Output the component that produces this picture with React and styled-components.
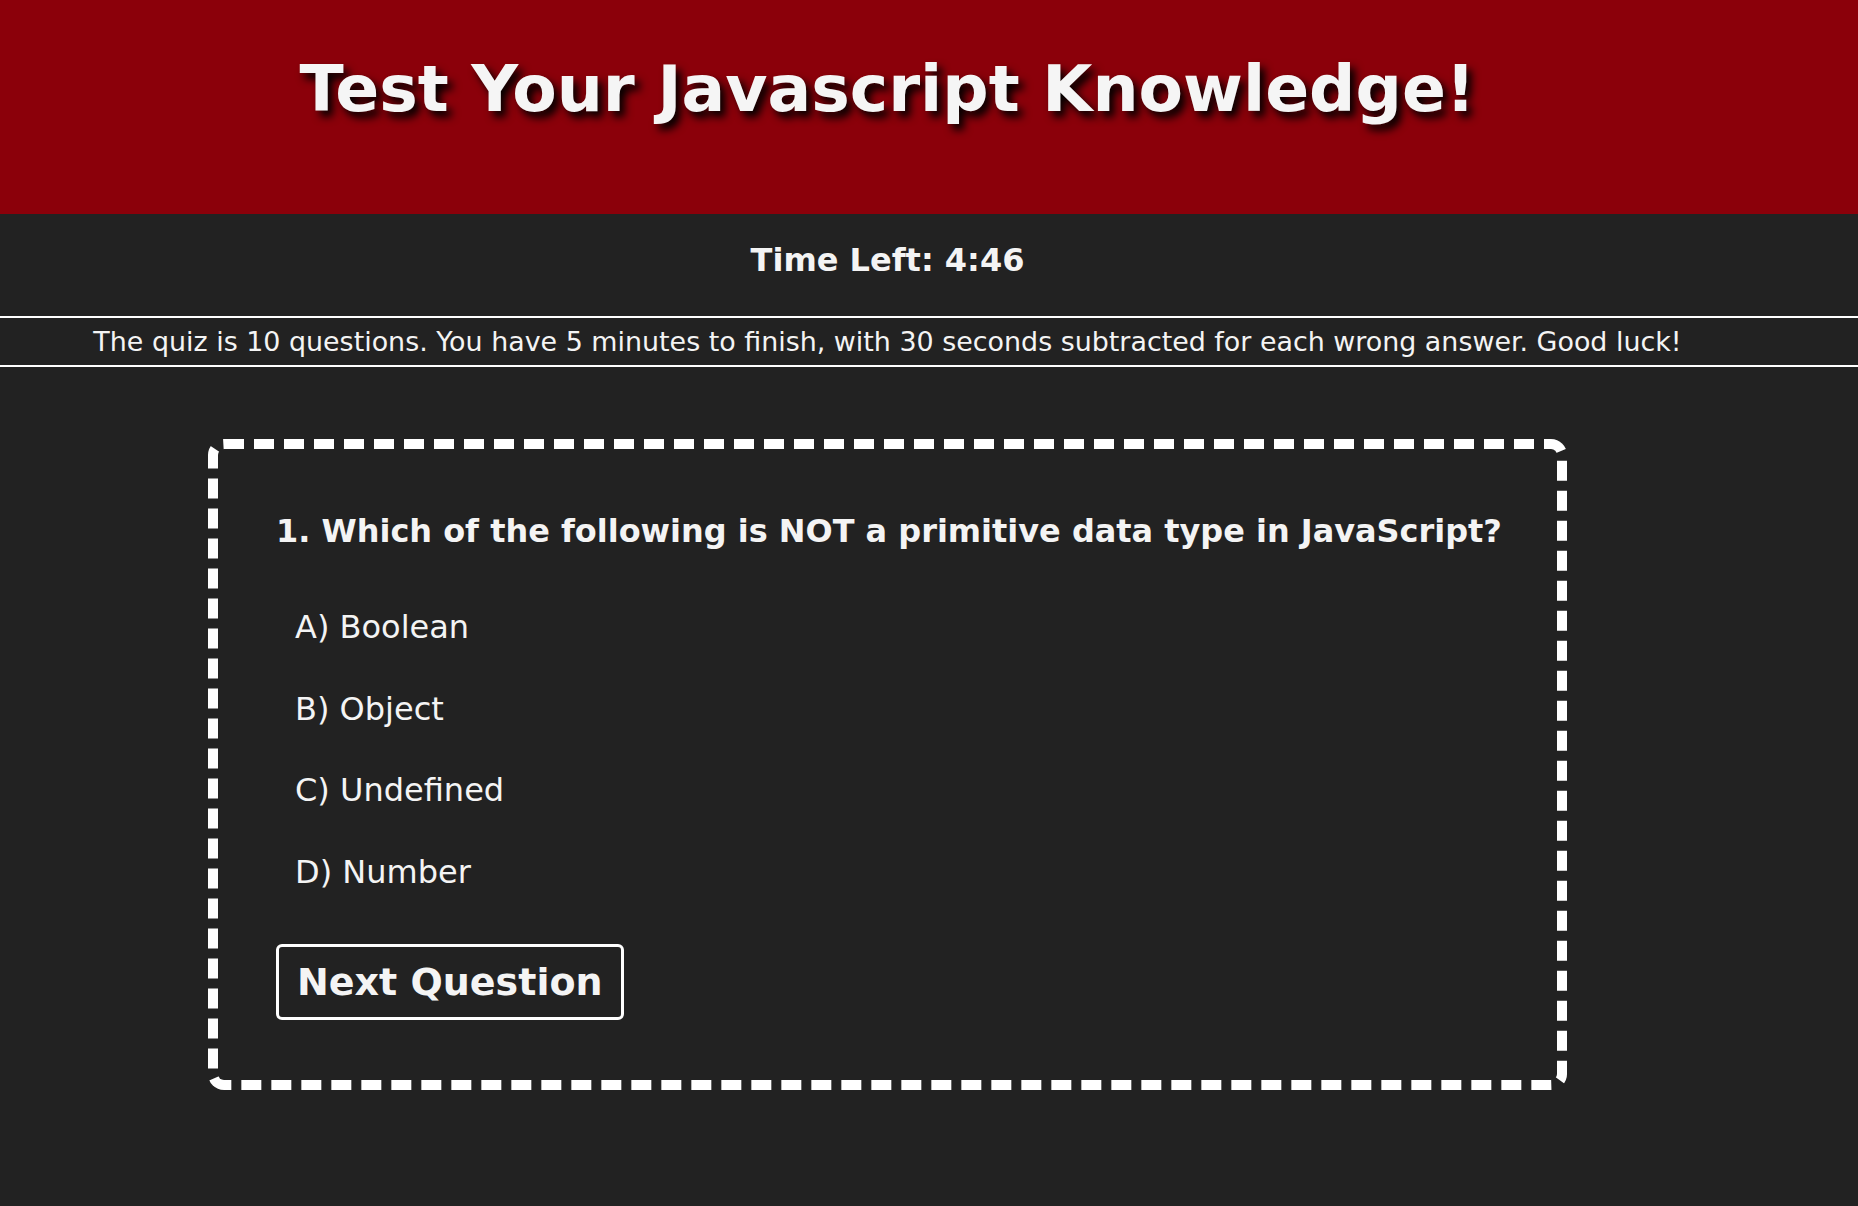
import React from 'react'
import styled, { createGlobalStyle } from 'styled-components'

const GlobalStyle = createGlobalStyle`
  html, body {
    margin: 0;
    padding: 0;
    background-color: #222222;
    font-family: 'DejaVu Sans', Verdana, sans-serif;
    color: #f4f4f4;
  }
  body {
    min-height: 1206px;
  }
`

// red title band
const Header = styled.header`
  height: 214px;
  box-sizing: border-box;
  padding: 51px 83px 0 0;
  background-color: #8b000a;

  h1 {
    margin: 0;
    text-align: center;
    font-size: 64.8px;
    font-weight: 700;
    line-height: 76px;
    color: #f5f5f5;
    text-shadow: 5px 6px 8px #000;
  }
`

const Timer = styled.div`
  margin-top: 28px;
  padding-right: 83px;
  text-align: center;
  font-size: 32px;
  font-weight: 700;
  line-height: 37px;
`

const Rules = styled.p`
  margin: 37px 0 0;
  padding: 8px 83px 8px 0;
  border-top: 2px solid #ffffff;
  border-bottom: 2px solid #ffffff;
  text-align: center;
  font-size: 26.9px;
  line-height: 31px;
`

const Main = styled.main`
  display: flex;
  justify-content: center;
  padding: 72px 83px 100px 0;
`

const QuizCard = styled.section`
  width: 1359px;
  box-sizing: border-box;
  padding: 64px 28px 60px 58px;
  border: 10px dashed #ffffff;
  border-radius: 16px;
`

const Question = styled.h2`
  margin: 0;
  font-size: 31.95px;
  font-weight: 700;
  line-height: 37px;
  white-space: nowrap;
`

const Options = styled.ul`
  list-style: none;
  margin: 59px 0 0;
  padding: 0 0 0 19px;
  display: flex;
  flex-direction: column;
  gap: 44.5px;
`

const Option = styled.li`
  font-size: 32px;
  line-height: 37px;
  cursor: pointer;
`

const NextButton = styled.button`
  margin-top: 53px;
  padding: 13px 18px;
  border: 3px solid #ffffff;
  border-radius: 6px;
  background: transparent;
  color: #f4f4f4;
  font-family: 'DejaVu Sans', Verdana, sans-serif;
  font-size: 38px;
  font-weight: 700;
  line-height: 44px;
  cursor: pointer;
`

const answers = ['A) Boolean', 'B) Object', 'C) Undefined', 'D) Number']

export default function App() {
  return (
    <>
      <GlobalStyle />
      <Header>
        <h1>Test Your Javascript Knowledge!</h1>
      </Header>
      <Timer>Time Left: 4:46</Timer>
      <Rules>
        The quiz is 10 questions. You have 5 minutes to finish, with 30 seconds
        subtracted for each wrong answer. Good luck!
      </Rules>
      <Main>
        <QuizCard>
          <Question>
            1. Which of the following is NOT a primitive data type in JavaScript?
          </Question>
          <Options>
            {answers.map(a => (
              <Option key={a}>{a}</Option>
            ))}
          </Options>
          <NextButton>Next Question</NextButton>
        </QuizCard>
      </Main>
    </>
  )
}
